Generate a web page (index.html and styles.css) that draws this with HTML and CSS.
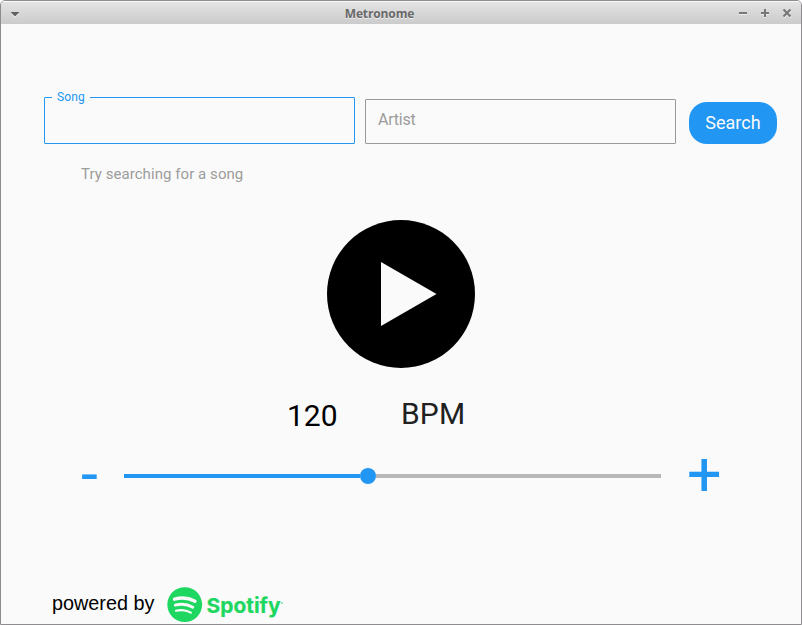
FILE: index.html
```html
<!DOCTYPE html>
<html lang="en">
<head>
<meta charset="utf-8">
<title>Metronome</title>
<link rel="stylesheet" href="styles.css">
</head>
<body>
<div class="window">
  <header class="titlebar">
    <svg class="menu-icon" width="10" height="8" viewBox="0 0 10 8"><path d="M1 3h8L5 8z" fill="#f4f4f4"/><path d="M.5 2h9L5 6.500z" fill="#606060"/></svg>
    <h1 class="title">Metronome</h1>
    <svg class="controls" width="56" height="12" viewBox="0 0 56 12">
      <path d="M2 7h8M24 7h8M28 3v8M47 3.500l7 7M54 3.500l-7 7" stroke="#f0f0f0" stroke-width="2" fill="none"/>
      <path d="M2 6h8M24 6h8M28 2v8" stroke="#777" stroke-width="2" fill="none"/>
      <path d="M46.500 2.500l7 7M53.500 2.500l-7 7" stroke="#777" stroke-width="2.200" fill="none"/>
    </svg>
  </header>
  <main class="content">
    <form class="search">
      <fieldset class="field active"><legend>Song</legend></fieldset>
      <div class="field">Artist</div>
      <button class="search-button" type="button">Search</button>
    </form>
    <p class="hint">Try searching for a song</p>
    <svg class="play" width="148" height="148" viewBox="0 0 148 148"><circle cx="74" cy="74" r="74"/><path d="M54 42v64l55.500-32z" fill="#fafafa"/></svg>
    <div class="tempo"><span class="value">120</span><span class="unit">BPM</span></div>
    <div class="adjust">
      <span class="step minus">-</span>
      <div class="track"><div class="fill"></div><div class="thumb"></div><div class="rest"></div></div>
      <span class="step plus">+</span>
    </div>
    <footer class="credit">
      <span class="powered">powered by</span>
      <svg class="brand" width="118" height="36" viewBox="0 0 118 36">
        <circle cx="17.700" cy="17.600" r="17.400" fill="#1ed760"/>
        <g fill="none" stroke="#fafafa" stroke-linecap="round"><path d="M7.500 12.200c7-2 14.500-1.200 20.500 2" stroke-width="3.300"/><path d="M8.300 18.200c6-1.700 12.300-1 17.500 2" stroke-width="2.800"/><path d="M9 23.700c5.300-1.200 10.500-.6 14.800 1.900" stroke-width="2.200"/></g>
        <text x="39.500" y="25.500" textLength="74" lengthAdjust="spacingAndGlyphs" class="brand-name">Spotify</text>
        <circle cx="115" cy="16" r=".9" fill="#1ed760" opacity=".7"/>
      </svg>
    </footer>
  </main>
</div>
</body>
</html>
```
FILE: styles.css
```css
* { box-sizing: border-box; }
body { margin: 0; background: #fff; font-family: Roboto, sans-serif; }
.window { width: 802px; height: 625px; border: 1px solid #8f8c8f; border-radius: 5px 5px 0 0; background: #fafafa; overflow: hidden; }
.titlebar { height: 23px; display: flex; align-items: center; padding: 0 8px 0 9px; border-top: 1px solid #fafafa; background: linear-gradient(#e3e3e3, #cbcbcb); }
.title { flex: 1; margin: 0; padding: 2px 0 0 2px; text-align: center; font: bold 12px/20px "Open Sans", sans-serif; letter-spacing: -.12px; color: #696969; text-shadow: 0 1px #eee; }
.menu-icon { margin-top: 1px; }
.content { height: 600px; display: flex; flex-direction: column; }
.search { display: flex; align-items: flex-end; margin: 66px 0 0 43px; height: 54px; }
.field { width: 311px; height: 45px; margin: 0 10px 0 0; padding: 0 12px; border: 1px solid #999; border-radius: 1px; font-size: 16px; line-height: 40px; letter-spacing: -.25px; color: #9c9c9c; }
.field.active { height: 54px; padding: 0 7px; border-color: #2196f3; }
.field legend { padding: 0 5px; font-size: 12px; line-height: 16px; letter-spacing: .1px; color: #2196f3; }
.field.active { height: 55px; }
.search-button { width: 88px; height: 42px; margin-left: 3px; padding: 0; border: 0; border-radius: 18px; background: #2196f3; color: #fafafa; font: 18px/42px Roboto, sans-serif; }
.hint { margin: 20px 0 0 80px; font-size: 15px; line-height: 20px; letter-spacing: .06px; color: #9c9c9c; }
.play { margin: 36px 0 0 326px; flex: none; }
.tempo { display: flex; margin: 27px 0 0 286px; height: 40px; font-size: 30px; line-height: 40px; }
.value { width: 114px; padding-top: 1px; color: #000; }
.unit { line-height: 38px; letter-spacing: .15px; color: #212121; }
.adjust { display: flex; align-items: center; height: 60px; margin: 11px 0 0 80px; }
.step { font-size: 61px; line-height: 60px; padding-bottom: 5px; color: #2196f3; }
.minus { width: 43px; }
.track { display: flex; align-items: center; width: 537px; }
.fill { width: 236px; height: 4px; background: #2196f3; }
.thumb { width: 16px; height: 16px; border-radius: 50%; background: #2196f3; }
.rest { flex: 1; height: 4px; background: #b8b8b8; }
.plus { margin-left: 26px; }
.credit { display: flex; margin: 81px 0 0 51px; height: 37px; }
.powered { width: 115px; font: 19.8px/32px "Liberation Sans", sans-serif; color: #000; }
.brand { flex: none; }
.brand-name { font: 700 20.5px Inter, sans-serif; fill: #1ed760; stroke: #1ed760; stroke-width: .2px; }
```
